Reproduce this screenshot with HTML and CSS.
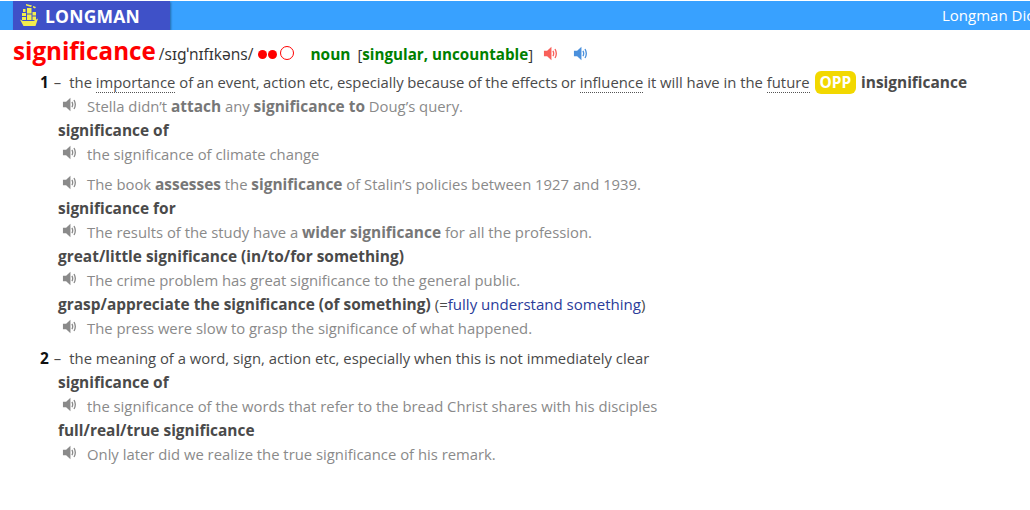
FILE: index.html
```html
<!DOCTYPE html>
<html lang="en">
<head>
<meta charset="utf-8">
<title>significance - Longman Dictionary</title>
<link rel="stylesheet" href="styles.css">
</head>
<body>
<svg class="sprite" width="0" height="0" aria-hidden="true">
  <symbol id="spk" viewBox="0 0 16 16">
    <path fill="currentColor" d="M1 5h3.400L9 .8v14.400L4.400 11H1z"/>
    <path fill="none" stroke="currentColor" stroke-width="1.400" d="M10.600 5.200q1.600 2.800 0 5.600M12.800 3.200q2.800 4.800 0 9.600"/>
  </symbol>
</svg>
<header class="topbar">
  <div class="brand">
    <svg class="ship" viewBox="0 0 18 24" width="18" height="24" aria-hidden="true">
      <path fill="#f2ee4e" d="M0 16.500l3 1.500h10.500l4.500-2.500-2.500 7.500H3.500z"/>
      <path fill="#f2ee4e" d="M2 10h4v3H2zM2 14h4v3H2zM7 5h4.500v5.500H7zM7 11.500h4.500V17H7zM12.500 9H16v3.500h-3.500zM12.500 13.500H16V17h-3.500zM3 6h2.500v3H3zM6 1l6 1.500-1 1.500-5-1.500zM13 3l3 1-1 1.500-2-1z"/>
    </svg>
    <span class="brand-name">LONGMAN</span>
  </div>
  <span class="topbar-title">Longman Dictionary of Contemporary English</span>
</header>
<main class="entry">
  <div class="head">
    <span class="hw">significance</span>
    <span class="pron">/sɪɡˈnɪfɪkəns/</span>
    <span class="freq"><i class="dot"></i><i class="dot"></i><i class="ring"></i></span>
    <span class="pos">noun</span>
    <span class="gram">[<b>singular, uncountable</b>]</span>
    <svg class="spk spk-red"><use href="#spk"/></svg>
    <svg class="spk spk-blue"><use href="#spk"/></svg>
  </div>

  <section class="sense">
    <p class="def"><b class="num">1</b><span class="dash">–</span>the <span class="ref">importance</span> <span class="tight">of an event, action etc, especially because of the effects or</span> <span class="ref">influence</span> it will have in the <span class="ref">future</span> <span class="opp">OPP</span> <b class="xref">insignificance</b></p>
    <p class="ex"><svg class="spk"><use href="#spk"/></svg>Stella didn’t <b>attach</b> any <b>significance to</b> Doug’s query.</p>
    <p class="colloc">significance of</p>
    <p class="ex"><svg class="spk"><use href="#spk"/></svg>the significance of climate change</p>
    <p class="ex ex-gap"><svg class="spk"><use href="#spk"/></svg>The book <b>assesses</b> the <b>significance</b> of Stalin’s policies between 1927 and 1939.</p>
    <p class="colloc">significance for</p>
    <p class="ex"><svg class="spk"><use href="#spk"/></svg>The results of the study have a <b>wider significance</b> for all the profession.</p>
    <p class="colloc">great/little significance (in/to/for something)</p>
    <p class="ex"><svg class="spk"><use href="#spk"/></svg>The crime problem has great significance to the general public.</p>
    <p class="colloc">grasp/appreciate the significance (of something) <span class="gloss">(=<span class="gloss-text">fully understand something</span>)</span></p>
    <p class="ex"><svg class="spk"><use href="#spk"/></svg>The press were slow to grasp the significance of what happened.</p>
  </section>

  <section class="sense">
    <p class="def"><b class="num">2</b><span class="dash">–</span>the meaning of a word, sign, action etc, especially when this is not immediately clear</p>
    <p class="colloc">significance of</p>
    <p class="ex"><svg class="spk"><use href="#spk"/></svg>the significance of the words that refer to the bread Christ shares with his disciples</p>
    <p class="colloc">full/real/true significance</p>
    <p class="ex"><svg class="spk"><use href="#spk"/></svg>Only later did we realize the true significance of his remark.</p>
  </section>
</main>
</body>
</html>
```
FILE: styles.css
```css
* { box-sizing: border-box; }
html, body { height: 100%; }
body {
  margin: 0;
  padding-top: 1px;
  overflow: hidden;
  background: #fff;
  color: #4a4a4a;
  font-family: "Open Sans", "Noto Sans", sans-serif;
  font-size: 14.830px;
}
b { font-size: 15.450px; }
.sprite { display: block; }
p { margin: 0; }

.topbar {
  height: 29px;
  display: flex;
  align-items: center;
  background: #38a1ff;
  padding-left: 13px;
  overflow: hidden;
  white-space: nowrap;
}
.brand {
  width: 157px;
  height: 29px;
  display: flex;
  align-items: center;
  gap: 7px;
  padding-left: 7px;
  background: #3f51c8;
  box-shadow: 1px 1px 2px rgba(0, 0, 0, .35);
  flex: none;
}
.ship { flex: none; margin-top: -2px; }
.brand-name {
  color: #fff;
  font-size: 17.500px;
  font-weight: 700;
  letter-spacing: .2px;
}
.topbar-title {
  margin-left: 772px;
  margin-top: -2px;
  color: #fff;
  font-size: 15px;
}

.entry { padding-left: 13px; }
.head {
  height: 40px;
  display: flex;
  align-items: baseline;
  padding-top: 4px;
}
.hw { color: #f00; font-size: 24.200px; font-weight: 700; line-height: 33px; }
.pron { margin-left: 3px; color: #333; font-size: 15.600px; }
.freq { display: inline-flex; align-items: center; gap: 1px; margin-left: 5px; align-self: center; margin-top: 2px; }
.dot { width: 9px; height: 9px; border-radius: 50%; background: #f00; margin-top: 3px; }
.ring { width: 14px; height: 14px; border-radius: 50%; border: 1.500px solid #f00; margin-left: 2px; }
.pos { margin-left: 16px; color: #008000; font-weight: 700; font-size: 15.450px; }
.gram { margin-left: 7px; color: #333; }
.gram b { color: #008000; font-size: 15.200px; }
.head .spk { align-self: center; margin-left: 10px; margin-top: 3px; }
.head .spk-blue { margin-left: 15px; }
.spk { width: 15px; height: 15px; color: #8a8a8a; flex: none; }
.spk-red { color: #f9605a; }
.spk-blue { color: #4a90dc; }

.sense { padding-left: 27px; }
.sense + .sense { margin-top: 6px; }
.def { line-height: 24px; white-space: nowrap; }
.num { color: #111; }
.dash { margin: 0 8px 0 5px; }
.ref { border-bottom: 1px dotted #555; }
.tight { word-spacing: -.4px; }
.opp {
  display: inline-block;
  height: 23px;
  line-height: 22px;
  margin: 0 1px;
  padding: 0 5px;
  border-radius: 6px;
  background: #f2d800;
  color: #fff;
  font-weight: 700;
  font-size: 15.450px;
}
.xref { color: #4a4a4a; }
.colloc { padding-left: 18px; line-height: 24px; font-weight: 700; font-size: 15.450px; color: #4a4a4a; }
.gloss { font-weight: 400; font-size: 15.050px; }
.gloss-text { color: #2a3c9a; }
.ex {
  display: flex;
  align-items: baseline;
  padding-left: 22px;
  line-height: 24px;
  color: #8a8a8a;
  white-space: pre-wrap;
}
.ex .spk { align-self: center; margin: -3px 10px 0 0; }
.ex b { color: #777; }
.ex-gap { margin-top: 6px; }
```
